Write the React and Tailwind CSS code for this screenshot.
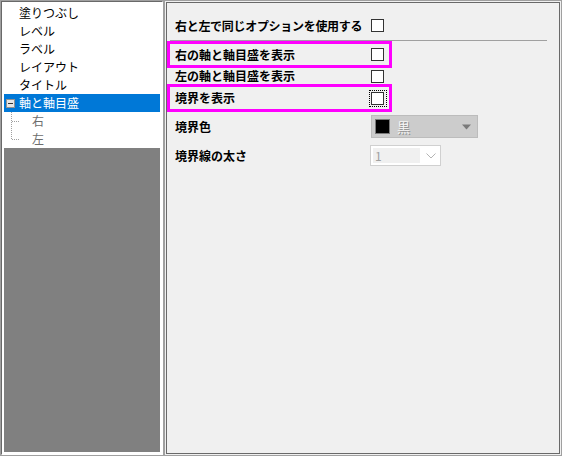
import React from 'react';

const font = "font-['Noto_Sans_CJK_JP','Noto_Sans',sans-serif]";

const Checkbox = () => (
  <span className="block w-[13px] h-[13px] border border-[#333333] bg-white" />
);

const treeItems = ['塗りつぶし', 'レベル', 'ラベル', 'レイアウト', 'タイトル'];

const TreeLines = ({ last }) => (
  <svg width="28" height="18" className="shrink-0">
    <line x1="7.5" y1="0" x2="7.5" y2={last ? 9.5 : 18} stroke="#a0a0a0" strokeDasharray="1 1" />
    <line x1="8" y1="9.5" x2="15" y2="9.5" stroke="#a0a0a0" strokeDasharray="1 1" />
  </svg>
);

const Tree = () => (
  <div className="w-[164px] h-full border border-[#a0a0a0]">
    <div className="h-full flex flex-col bg-white p-[2px] border-t border-l border-[#696969] border-r border-b border-r-white border-b-white">
      {treeItems.map(t => (
        <div key={t} className="h-[18px] flex items-center pl-[15px] text-[12px] leading-none text-black">
          {t}
        </div>
      ))}
      <div className="h-[18px] flex items-center pl-[2px] gap-[4px] bg-[#0078d7] text-white text-[12px] leading-none">
        <span className="w-[9px] h-[9px] border border-[#919191] bg-[#e6e6e6] flex items-center justify-center">
          <span className="block w-[5px] h-px bg-[#333333]" />
        </span>
        軸と軸目盛
      </div>
      {['右', '左'].map((t, i) => (
        <div key={t} className="h-[18px] flex items-center text-[12px] leading-none text-[#6d6d6d]">
          <TreeLines last={i === 1} />
          {t}
        </div>
      ))}
      <div className="flex-1 bg-[#808080]" />
    </div>
  </div>
);

const OptionsPanel = () => (
  <div className="flex-1 h-full border border-[#a0a0a0] p-px">
    <div className="h-full border border-[#696969] bg-[#f0f0f0] flex flex-col font-bold text-[12px] leading-none text-black">
      {/* same options row + separator */}
      <div className="h-[38px] pt-2 ml-[3px] mr-[12px] border-b border-[#a0a0a0] flex items-center">
        <div className="w-[219px] pl-[5px] pr-[5px] flex items-center justify-between">
          <span className="tracking-[-0.3px]">右と左で同じオプションを使用する</span>
          <Checkbox />
        </div>
      </div>

      <div className="w-[225px] h-[27px] border-[3px] border-[#ff00ff] pl-[5px] pr-[5px] flex items-center justify-between">
        <span>右の軸と軸目盛を表示</span>
        <Checkbox />
      </div>

      <div className="w-[225px] h-[16px] px-[8px] flex items-center justify-between">
        <span>左の軸と軸目盛を表示</span>
        <Checkbox />
      </div>

      <div className="w-[225px] h-[28px] border-[3px] border-[#ff00ff] pl-[5px] pr-[2px] flex items-center justify-between">
        <span>境界を表示</span>
        <span className="w-[18px] h-[17px] border border-dotted border-black pl-px pt-px">
          <Checkbox />
        </span>
      </div>

      <div className="mt-[3px] pl-[8px] flex items-center">
        <span className="w-[196px]">境界色</span>
        <div className="w-[107px] h-[23px] bg-[#cccccc] border border-[#bcbcbc] flex items-center pl-[3px] pr-[5px]">
          <span className="w-[15px] h-[15px] bg-black border border-[#7a7a7a]" />
          <span className="ml-[7px] font-normal text-[13px] text-[#f6f6f6] [text-shadow:1px_1px_0_#8c8c8c]">黒</span>
          <svg width="10" height="6" className="ml-auto">
            <path d="M0 0.5 L9 0.5 L4.5 5.5 Z" fill="#7a7a7a" />
          </svg>
        </div>
      </div>

      <div className="mt-[7px] pl-[8px] flex items-center">
        <span className="w-[195px]">境界線の太さ</span>
        <div className="w-[71px] h-[21px] bg-white border border-[#d0d0d0] flex items-center pl-[2px] pr-[4px]">
          <span className="w-[47px] h-[15px] bg-[#f0f0f0] pl-[2px] flex items-center font-normal text-[12px] text-[#a0a0a0]">1</span>
          <svg width="10" height="6" className="ml-auto">
            <path d="M0.5 0.5 L5 5 L9.5 0.5" fill="none" stroke="#b4b4b4" />
          </svg>
        </div>
      </div>
    </div>
  </div>
);

export default function App() {
  return (
    <div className={`w-[562px] h-[456px] bg-[#f0f0f0] flex ${font}`}>
      <Tree />
      <OptionsPanel />
    </div>
  );
}
